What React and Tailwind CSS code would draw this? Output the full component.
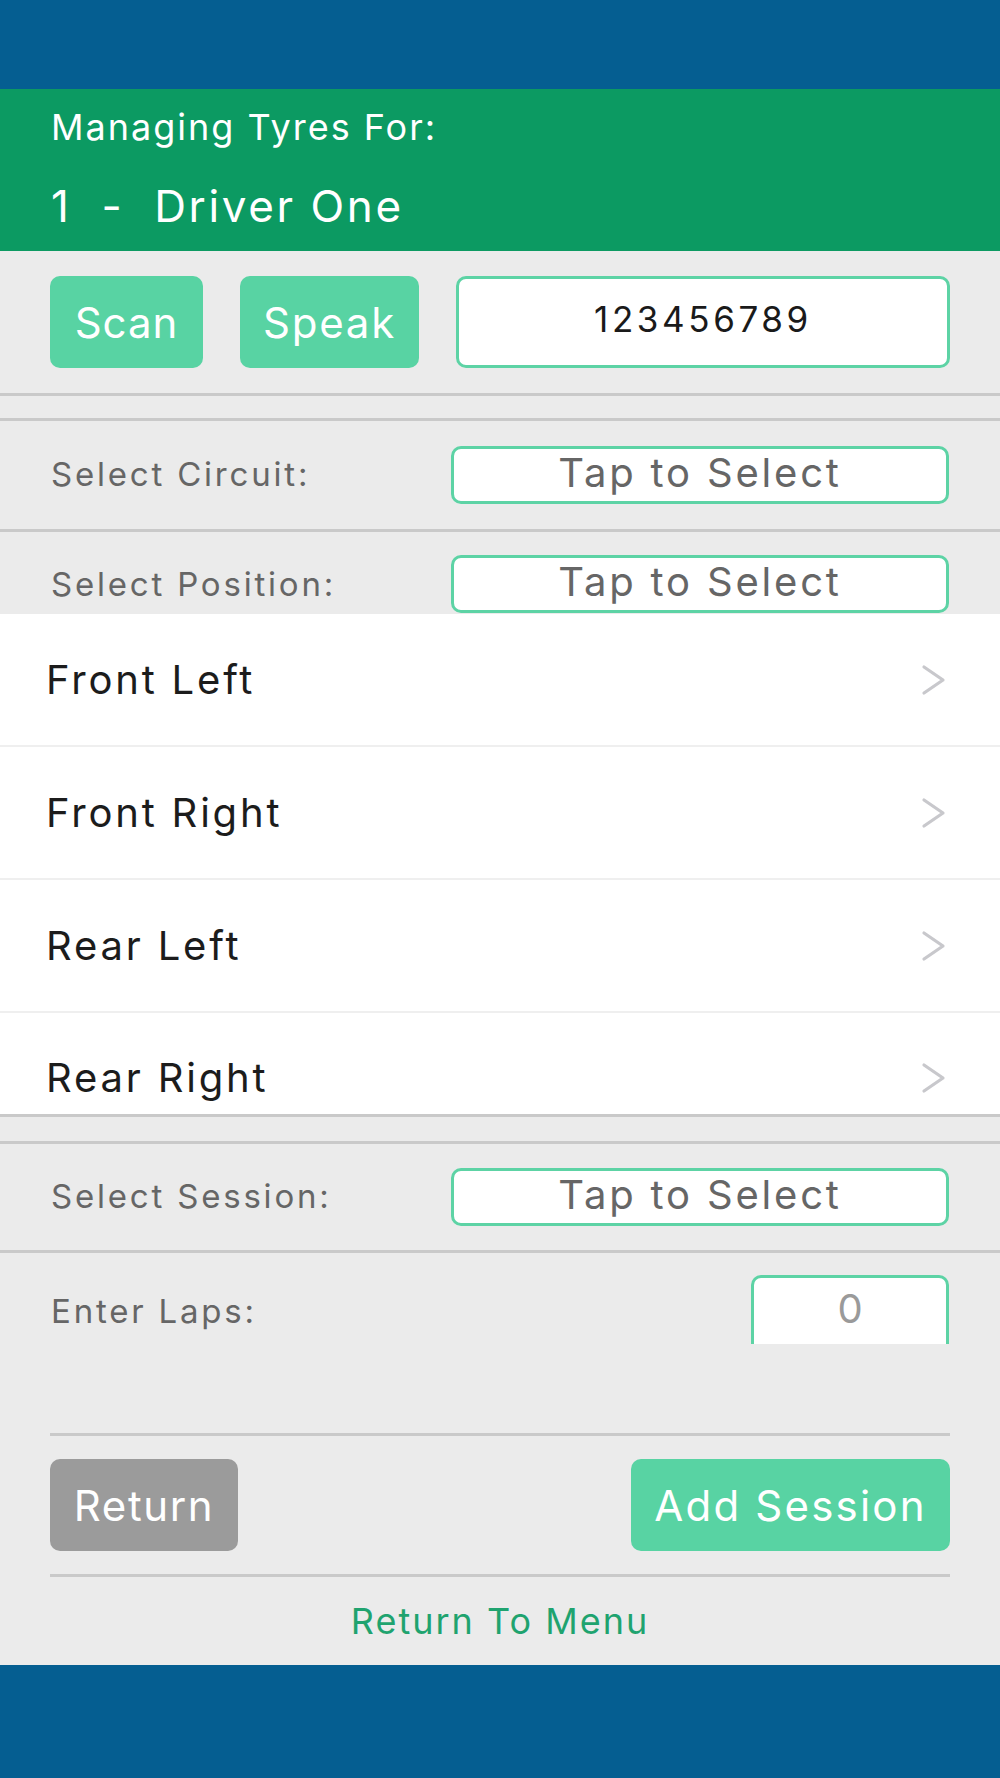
const POSITIONS = ["Front Left", "Front Right", "Rear Left", "Rear Right"];

function Chevron() {
  return (
    <svg width="26" height="32" viewBox="0 0 26 32" fill="none" className="mr-[3px]">
      <path d="M3 3 L22 16 L3 29" stroke="#c8c8cc" strokeWidth="3.2" strokeLinecap="round" strokeLinejoin="round" />
    </svg>
  );
}

function SelectRow({ label, className = "", labelClass = "" }) {
  return (
    <div className={`flex items-center justify-between pl-[51px] pr-[51px] ${className}`}>
      <span className={`text-[33px] tracking-[2.8px] text-[#666666] ${labelClass}`}>{label}</span>
      <div className="flex h-[58px] w-[498px] items-center justify-center rounded-[10px] border-[3px] border-[#5dd3a5] bg-white pb-[4px] text-[40px] tracking-[2.8px] text-[#666666]">
        Tap to Select
      </div>
    </div>
  );
}

export default function App() {
  return (
    <div className="flex h-[1778px] w-[1000px] flex-col bg-[#ebebeb] font-['Inter',sans-serif]">
      <div className="h-[89px] bg-[#055e91]" />

      <div className="flex h-[162px] flex-col bg-[#0c9a62] px-[51px] pt-[16px] text-white">
        <p className="text-[36px] leading-[44px] tracking-[2px]">Managing Tyres For:</p>
        <p className="mt-[32px] text-[44px] leading-[50px] tracking-[2.6px]">1&nbsp; - &nbsp;Driver One</p>
      </div>

      <div className="flex items-center gap-[37px] px-[50px] pt-[25px] pb-[25px]">
        <button className="h-[92px] w-[153px] rounded-[10px] bg-[#58d3a3] text-[42px] tracking-[1px] text-white">Scan</button>
        <button className="h-[92px] w-[179px] rounded-[10px] bg-[#58d3a3] text-[42px] tracking-[1.8px] text-white">Speak</button>
        <div className="ml-auto flex h-[92px] w-[494px] items-center justify-center rounded-[10px] border-[3px] border-[#5dd3a5] bg-white pb-[6px] text-[35px] tracking-[3.6px] text-[#1a1a1a]">
          123456789
        </div>
      </div>

      <div className="h-[3px] bg-[#c9c9c9]" />
      <div className="h-[22px]" />
      <div className="h-[3px] bg-[#c9c9c9]" />

      <SelectRow label="Select Circuit:" className="h-[108px]" />
      <div className="h-[3px] bg-[#c9c9c9]" />
      <SelectRow label="Select Position:" className="h-[82px] items-end pb-px" labelClass="mb-[4px]" />

      <div className="h-[500px] bg-white">
        {POSITIONS.map((p, i) => (
          <div
            key={p}
            className={`flex h-[133px] items-center justify-between pl-[46px] pr-[50px] ${i < 3 ? "border-b-2 border-[#efefef]" : "pb-[4px]"}`}
          >
            <span className="text-[40px] tracking-[2.8px] text-[#1c1c1c]">{p}</span>
            <Chevron />
          </div>
        ))}
      </div>

      <div className="h-[3px] bg-[#c9c9c9]" />
      <div className="h-[24px]" />
      <div className="h-[3px] bg-[#c9c9c9]" />

      <SelectRow label="Select Session:" className="h-[106px]" />
      <div className="h-[3px] bg-[#c9c9c9]" />

      <div className="flex h-[180px] items-start justify-between px-[51px] pt-[22px]">
        <span className="mt-[12px] text-[33px] tracking-[2.8px] text-[#666666]">Enter Laps:</span>
        <div className="flex h-[69px] w-[198px] items-center justify-center rounded-t-[10px] border-x-[3px] border-t-[3px] border-[#5dd3a5] bg-white pb-[4px] text-[40px] text-[#9a9a9a]">
          0
        </div>
      </div>

      <div className="mx-[50px] h-[3px] bg-[#c9c9c9]" />

      <div className="flex items-center justify-between px-[50px] py-[23px]">
        <button className="h-[92px] w-[188px] rounded-[10px] bg-[#9b9b9b] text-[42px] tracking-[1.6px] text-white">Return</button>
        <button className="h-[92px] w-[319px] rounded-[10px] bg-[#58d3a3] text-[42px] tracking-[2.2px] text-white">Add Session</button>
      </div>

      <div className="mx-[50px] h-[3px] bg-[#c9c9c9]" />

      <div className="flex flex-1 items-center justify-center text-[36px] tracking-[2px] text-[#1fa36f]">Return To Menu</div>

      <div className="h-[113px] bg-[#055e91]" />
    </div>
  );
}
